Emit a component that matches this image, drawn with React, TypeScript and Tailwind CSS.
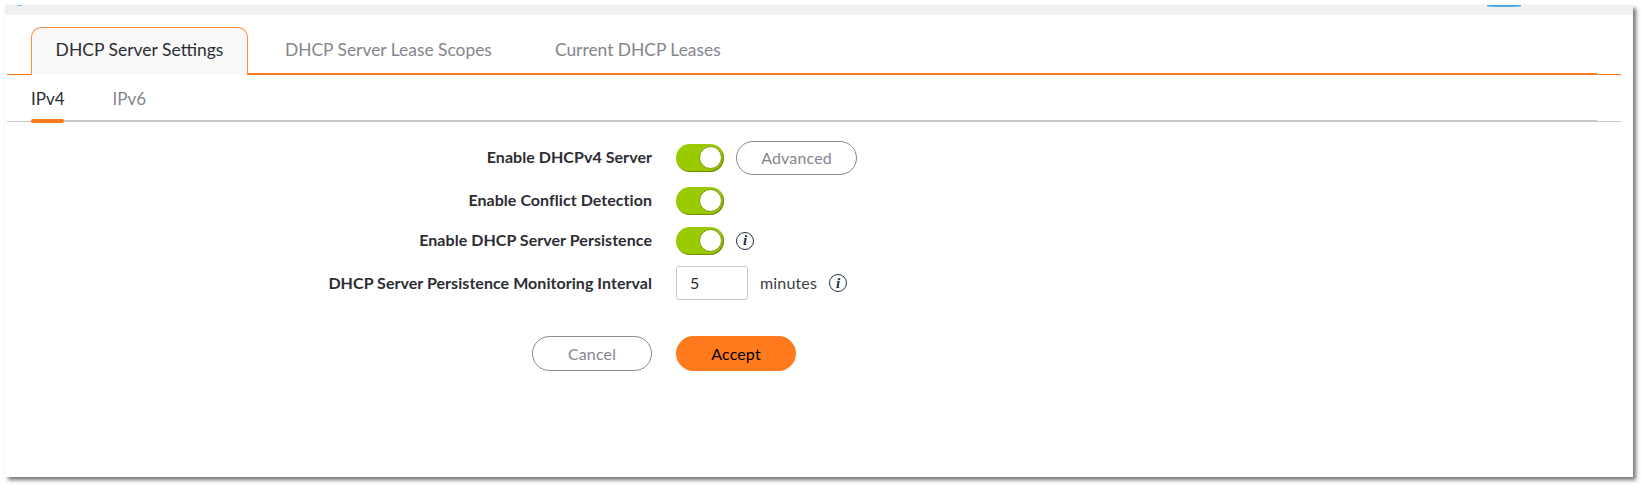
const font = "font-['Lato','Noto_Sans',sans-serif]";

const Toggle = () => (
  <div className="flex h-7 w-12 items-center justify-end rounded-full bg-[#9acb00] pr-[2px] shadow-[inset_-1px_-1px_1px_rgba(90,110,0,0.7)]">
    <div className="h-[23px] w-[23px] rounded-full border border-[#7c9a00] bg-white" />
  </div>
);

const Info = () => (
  <div className="flex h-[18px] w-[18px] shrink-0 items-center justify-center rounded-full border-[1.5px] border-[#23304a] font-['Liberation_Serif',serif] text-[15px] font-bold italic leading-none text-[#23304a]">
    i
  </div>
);

const Row = ({ label, className, children }: { label: string; className: string; children: React.ReactNode }) => (
  <div className={`flex items-center ${className}`}>
    <div className="w-[647px] pr-6 pb-[1px] text-right text-[16px] font-bold tracking-[0.05px] text-[#2d2d33]">{label}</div>
    {children}
  </div>
);

const App = () => {
  return (
    <div className={`relative h-[486px] w-[1642px] overflow-hidden bg-white pl-[5px] pt-[5px] ${font}`}>
      <div className="h-[472px] w-[1628px] bg-white shadow-[3px_3px_4px_rgba(0,0,0,0.55)]">
        <div className="h-[10px] bg-[#f0f0f0]" />
        <div className="pl-[2px] pt-3">
          <div className="flex h-[48px] w-[1614px] items-stretch border-b border-[#ff7a1c]">
            <div className="w-6 shrink-0" />
            <div className="-mb-px flex w-[217px] shrink-0 items-center justify-center rounded-t-[10px] border border-b-0 border-[#ff8f3f] bg-[#f9f9f9] pb-[2px] text-[17.5px] text-[#2d2d33]">
              DHCP Server Settings
            </div>
            <div className="-mb-[1px] flex flex-1 items-center gap-[63px] border-b-2 border-[#ff7a1c] pl-[37px] pr-6 pt-[1px] text-[17.4px] text-[#85858d]">
              <span>DHCP Server Lease Scopes</span>
              <span>Current DHCP Leases</span>
            </div>
            <div className="w-6 shrink-0" />
          </div>
          <div className="relative flex h-[47px] w-[1614px] items-center gap-12 border-b border-[#c8c8c8] pl-6 pt-[2px] text-[17px]">
            <span className="text-[#2d2d33]">IPv4</span>
            <span className="text-[#85858d]">IPv6</span>
            <div className="absolute bottom-[-1px] left-6 right-6 h-[2px] bg-[#c8c8c8]" />
            <div className="absolute bottom-[-2px] left-6 h-[4px] w-[33px] rounded-full bg-[#ff7a1c]" />
          </div>
        </div>
        <div className="flex flex-col pl-[24px] pt-[18px]">
          <Row label="Enable DHCPv4 Server" className="h-[35px]">
            <Toggle />
            <button className="ml-3 h-[34px] w-[121px] self-end rounded-full border border-[#8a8a8a] text-[16px] tracking-[0.15px] text-[#85858d]">Advanced</button>
          </Row>
          <Row label="Enable Conflict Detection" className="mt-[8px] h-[35px]">
            <Toggle />
          </Row>
          <Row label="Enable DHCP Server Persistence" className="mt-[5px] h-[35px]">
            <Toggle />
            <div className="ml-3">
              <Info />
            </div>
          </Row>
          <Row label="DHCP Server Persistence Monitoring Interval" className="mt-[8px] h-[34px]">
            <div className="flex h-[34px] w-[72px] items-center rounded-[3px] border border-[#c8c8c8] pl-[13px] text-[16px] text-[#2d2d33]">5</div>
            <span className="ml-3 text-[16px] tracking-[0.15px] text-[#3c3c44]">minutes</span>
            <div className="ml-3">
              <Info />
            </div>
          </Row>
          <div className="mt-9 flex h-[35px] gap-6 pl-[503px]">
            <button className="h-[35px] w-[120px] rounded-full border border-[#8a8a8a] text-[16px] tracking-[0.15px] text-[#85858d]">Cancel</button>
            <button className="h-[35px] w-[120px] rounded-full bg-[#ff7a1c] text-[16px] tracking-[0.15px] text-black">Accept</button>
          </div>
        </div>
      </div>
      <div className="absolute left-[1487px] top-[5px] h-[2px] w-[34px] rounded-b-[50%] bg-[#45a9e6]" />
      <div className="absolute left-[17px] top-[5px] h-[1px] w-[5px] bg-[#7fbfe8]" />
    </div>
  );
};

export default App;
